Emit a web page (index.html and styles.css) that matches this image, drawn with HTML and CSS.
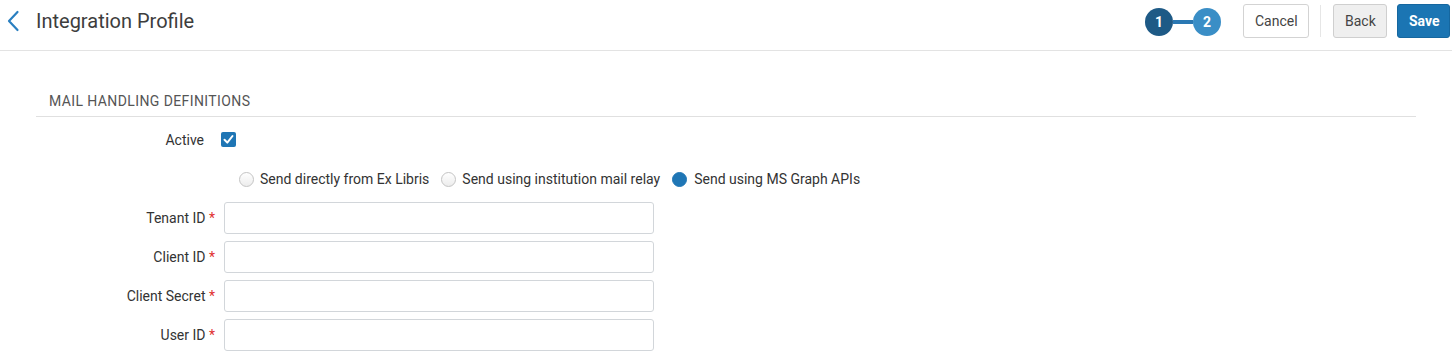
FILE: index.html
```html
<!DOCTYPE html>
<html>
<head>
<meta charset="utf-8">
<link rel="stylesheet" href="styles.css">
</head>
<body>
<header class="topbar">
  <div class="title-wrap">
    <span class="back-arrow">
      <svg width="14" height="22" viewBox="0 0 14 22"><path d="M11.5 2 L3 11 L11.5 20" fill="none" stroke="#2a7fc0" stroke-width="2.2" stroke-linecap="round" stroke-linejoin="round"/></svg>
    </span>
    <h1 class="title">Integration Profile</h1>
  </div>
  <div class="actions">
    <div class="stepper">
      <span class="step step-done">1</span>
      <span class="step-line"></span>
      <span class="step step-current">2</span>
    </div>
    <button class="btn btn-cancel">Cancel</button>
    <span class="divider"></span>
    <button class="btn btn-back">Back</button>
    <button class="btn btn-save">Save</button>
  </div>
</header>

<main class="content">
  <section class="section">
    <h2 class="section-title">MAIL HANDLING DEFINITIONS</h2>
    <div class="form">
      <div class="row row-active">
        <label class="lbl lbl-active">Active</label>
        <span class="checkbox">
          <svg width="11" height="11" viewBox="0 0 11 11"><path d="M1.5 5.8 L4.3 8.6 L9.5 2" fill="none" stroke="#fff" stroke-width="2" stroke-linecap="round" stroke-linejoin="round"/></svg>
        </span>
      </div>
      <div class="radios">
        <span class="radio"><span class="dot"></span>Send directly from Ex Libris</span>
        <span class="radio"><span class="dot"></span>Send using institution mail relay</span>
        <span class="radio"><span class="dot dot-on"></span>Send using MS Graph APIs</span>
      </div>
      <div class="row field">
        <label class="lbl">Tenant ID <span class="req">*</span></label>
        <span class="input"></span>
      </div>
      <div class="row field">
        <label class="lbl">Client ID <span class="req">*</span></label>
        <span class="input"></span>
      </div>
      <div class="row field">
        <label class="lbl">Client Secret <span class="req">*</span></label>
        <span class="input"></span>
      </div>
      <div class="row field">
        <label class="lbl">User ID <span class="req">*</span></label>
        <span class="input"></span>
      </div>
    </div>
  </section>
</main>
</body>
</html>
```

FILE: styles.css
```css
* { box-sizing: border-box; }
html, body { margin: 0; padding: 0; background: #fff; }
body {
  font-family: Roboto, "Liberation Sans", Arial, sans-serif;
  color: #333;
  width: 1452px;
  height: 364px;
  overflow: hidden;
}
.topbar {
  height: 51px;
  border-bottom: 1px solid #e3e3e3;
  display: flex;
  justify-content: space-between;
  align-items: flex-start;
}
.title-wrap {
  display: flex;
  align-items: center;
  height: 42px;
  padding-left: 6px;
}
.back-arrow { display: flex; width: 14px; height: 22px; margin-right: 16px; }
.title {
  margin: 0;
  font-size: 20px;
  font-weight: 400;
  color: #3d3d3d;
}
.actions {
  display: flex;
  align-items: center;
  height: 42px;
  padding-right: 2px;
}
.stepper {
  display: flex;
  align-items: center;
  margin-right: 22px;
  margin-top: 1px;
}
.step {
  width: 28px;
  height: 28px;
  border-radius: 50%;
  color: #fff;
  font-size: 14px;
  font-weight: 700;
  display: flex;
  align-items: center;
  justify-content: center;
}
.step-done { background: #1e5a86; }
.step-current { background: #3a8ec6; }
.step-line {
  width: 20px;
  height: 4px;
  background: #2a78b3;
}
.btn {
  font-family: Roboto, "Liberation Sans", Arial, sans-serif;
  font-size: 14px;
  height: 34px;
  border-radius: 3px;
  padding: 0 11px;
  cursor: pointer;
}
.btn-cancel {
  background: #fff;
  border: 1px solid #d3d3d3;
  color: #444;
  width: 66px;
}
.divider {
  width: 1px;
  height: 32px;
  background: #e6e6e6;
  margin: 0 12px 0 11px;
}
.btn-back {
  background: #efefef;
  border: 1px solid #cfcfcf;
  color: #444;
  width: 54px;
  margin-right: 10px;
}
.btn-save {
  background: #1b75b3;
  border: 1px solid #16679f;
  color: #fff;
  font-weight: 700;
  width: 53px;
}
.content { padding: 38px 36px 0 36px; }
.section-title {
  margin: 0;
  font-size: 14px;
  font-weight: 400;
  letter-spacing: 0.4px;
  color: #555;
  padding: 4px 0 7px 13px;
  border-bottom: 1px solid #e0e0e0;
  width: 1380px;
}
.form { padding-top: 13px; }
.row {
  display: flex;
  align-items: center;
}
.lbl {
  font-size: 14px;
  color: #333;
  text-align: right;
  width: 180px;
  white-space: nowrap;
}
.row-active { height: 19px; }
.lbl-active { width: 168px; }
.checkbox {
  width: 15px;
  height: 15px;
  border-radius: 2px;
  background: #1f76b5;
  margin-left: 17px;
  display: flex;
  align-items: center;
  justify-content: center;
}
.radios {
  display: flex;
  align-items: center;
  margin-top: 21px;
  margin-left: 203px;
  font-size: 14px;
  color: #333;
  height: 18px;
}
.radio {
  display: flex;
  align-items: center;
  margin-right: 12px;
}
.dot {
  width: 15px;
  height: 15px;
  border-radius: 50%;
  border: 1px solid #c4c4c4;
  background: linear-gradient(#ffffff, #ececec);
  margin-right: 6px;
}
.dot-on {
  border-color: #1f76b5;
  background: #1f76b5;
  margin-right: 7px;
}
.field { margin-top: 7px; height: 32px; }
.radios + .field { margin-top: 14px; }
.field .lbl { width: 179px; }
.req { color: #e0302f; }
.input {
  margin-left: 9px;
  width: 430px;
  height: 32px;
  border: 1px solid #d2d6da;
  border-radius: 3px;
  background: #fff;
}
```
